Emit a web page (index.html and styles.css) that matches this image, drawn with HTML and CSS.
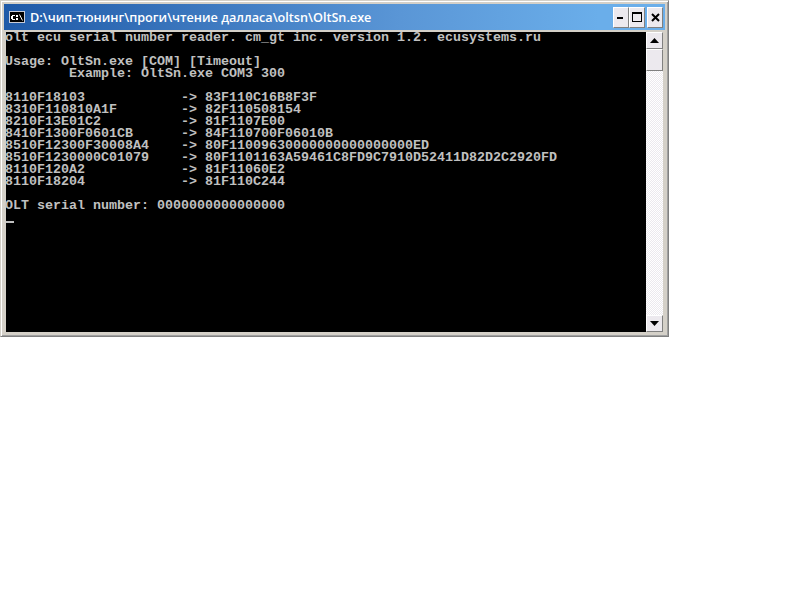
FILE: index.html
```html
<!DOCTYPE html>
<html lang="ru">
<head>
<meta charset="utf-8">
<title>OltSn.exe</title>
<link rel="stylesheet" href="styles.css">
</head>
<body>
<div class="window">
  <div class="titlebar">
    <svg class="appicon" width="16" height="12" viewBox="0 0 16 12">
      <rect x="0" y="0" width="16" height="12" fill="#c8ccd8"/>
      <rect x="1" y="1" width="14" height="10" fill="#000"/>
      <rect x="3" y="4" width="3" height="1" fill="#fff"/>
      <rect x="2" y="5" width="2" height="3" fill="#fff"/>
      <rect x="3" y="8" width="3" height="1" fill="#fff"/>
      <rect x="7" y="4" width="2" height="2" fill="#fff"/>
      <rect x="7" y="7" width="2" height="2" fill="#fff"/>
      <path d="M10.5 3.5l3 6" stroke="#fff" fill="none"/>
    </svg>
    <span class="title">D:\чип-тюнинг\проги\чтение далласа\oltsn\OltSn.exe</span>
    <div class="controls">
      <div class="btn">
        <svg width="8" height="3" viewBox="0 0 8 3"><rect width="6" height="2" y="1" fill="#000"/></svg>
      </div>
      <div class="btn">
        <svg width="10" height="10" viewBox="0 0 10 10"><path d="M0 0h10v10H0z M1 2v7h8V2z" fill="#000" fill-rule="evenodd"/></svg>
      </div>
      <div class="btn close">
        <svg width="9" height="9" viewBox="0 0 9 9"><path d="M1 1l7 7M8 1l-7 7" stroke="#000" stroke-width="2" fill="none"/></svg>
      </div>
    </div>
  </div>
  <div class="body">
    <div class="console"><pre class="text">olt ecu serial number reader. cm_gt inc. version 1.2. ecusystems.ru

Usage: OltSn.exe [COM] [Timeout]
        Example: OltSn.exe COM3 300

8110F18103            -&gt; 83F110C16B8F3F
8310F110810A1F        -&gt; 82F110508154
8210F13E01C2          -&gt; 81F1107E00
8410F1300F0601CB      -&gt; 84F110700F06010B
8510F12300F30008A4    -&gt; 80F11009630000000000000000ED
8510F1230000C01079    -&gt; 80F1101163A59461C8FD9C7910D52411D82D2C2920FD
8110F120A2            -&gt; 81F11060E2
8110F18204            -&gt; 81F110C244

OLT serial number: 0000000000000000
<span class="cursor"></span></pre></div>
    <div class="scrollbar">
      <div class="sbtn"><svg width="9" height="5" viewBox="0 0 9 5"><path d="M4.5 0L9 5H0z" fill="#000"/></svg></div>
      <div class="thumb"></div>
      <div class="track"></div>
      <div class="sbtn"><svg width="9" height="5" viewBox="0 0 9 5"><path d="M0 0h9L4.5 5z" fill="#000"/></svg></div>
    </div>
  </div>
</div>
</body>
</html>
```
FILE: styles.css
```css
html, body {
  margin: 0;
  padding: 0;
  background: #fff;
}
.window {
  box-sizing: border-box;
  width: 669px;
  height: 337px;
  display: flex;
  flex-direction: column;
  background: #d4d0c8;
  border-top: 1px solid #d4d0c8;
  border-left: 1px solid #d4d0c8;
  border-right: 1px solid #808080;
  border-bottom: 1px solid #808080;
  box-shadow: inset 1px 1px 0 #fff, inset -1px -1px 0 #a0a0a0;
  padding: 3px;
}
.titlebar {
  height: 26px;
  flex: none;
  display: flex;
  align-items: center;
  background: linear-gradient(to right, #1f5aa8, #5a96d6 60%, #6aaeea 90%);
  padding: 0 2px 0 5px;
}
.appicon { flex: none; margin-right: 5px; }
.title {
  flex: 1;
  color: #fff;
  font-family: "Open Sans", "Noto Sans", sans-serif;
  font-weight: 600;
  font-size: 12.65px;
  white-space: nowrap;
}
.controls { display: flex; flex: none; }
.btn {
  box-sizing: border-box;
  width: 16px;
  height: 21px;
  background: #ece9ee;
  border-top: 1px solid #fff;
  border-left: 1px solid #fff;
  border-right: 1px solid #808080;
  border-bottom: 1px solid #808080;
  display: flex;
  align-items: center;
  justify-content: center;
}
.close { margin-left: 2px; }
.body {
  flex: 1;
  display: flex;
  margin: 2px 2px 1px;
  min-height: 0;
  background: #000;
}
.console {
  flex: 1;
  background: #000;
}
.text {
  margin: 0 0 0 -1px;
  padding: 0;
  color: #c0c0c0;
  font-family: "Liberation Mono", monospace;
  font-size: 13.33px;
  font-weight: 700;
  line-height: 12px;
}
.cursor {
  display: inline-block;
  width: 8px;
  height: 2px;
  margin-left: 1px;
  background: #c0c0c0;
  vertical-align: -2px;
}
.scrollbar {
  flex: none;
  width: 17px;
  display: flex;
  flex-direction: column;
  background: #d4d0c8;
}
.sbtn, .thumb {
  box-sizing: border-box;
  width: 17px;
  background: #ece9ee;
  border-top: 1px solid #fff;
  border-left: 1px solid #fff;
  border-right: 1px solid #808080;
  border-bottom: 1px solid #808080;
  flex: none;
}
.sbtn {
  height: 17px;
  display: flex;
  align-items: center;
  justify-content: center;
}
.thumb { height: 22px; }
.track {
  flex: 1;
  background: repeating-conic-gradient(#fff 0 25%, #ece9ee 0 50%) 0 0 / 2px 2px;
}
```
